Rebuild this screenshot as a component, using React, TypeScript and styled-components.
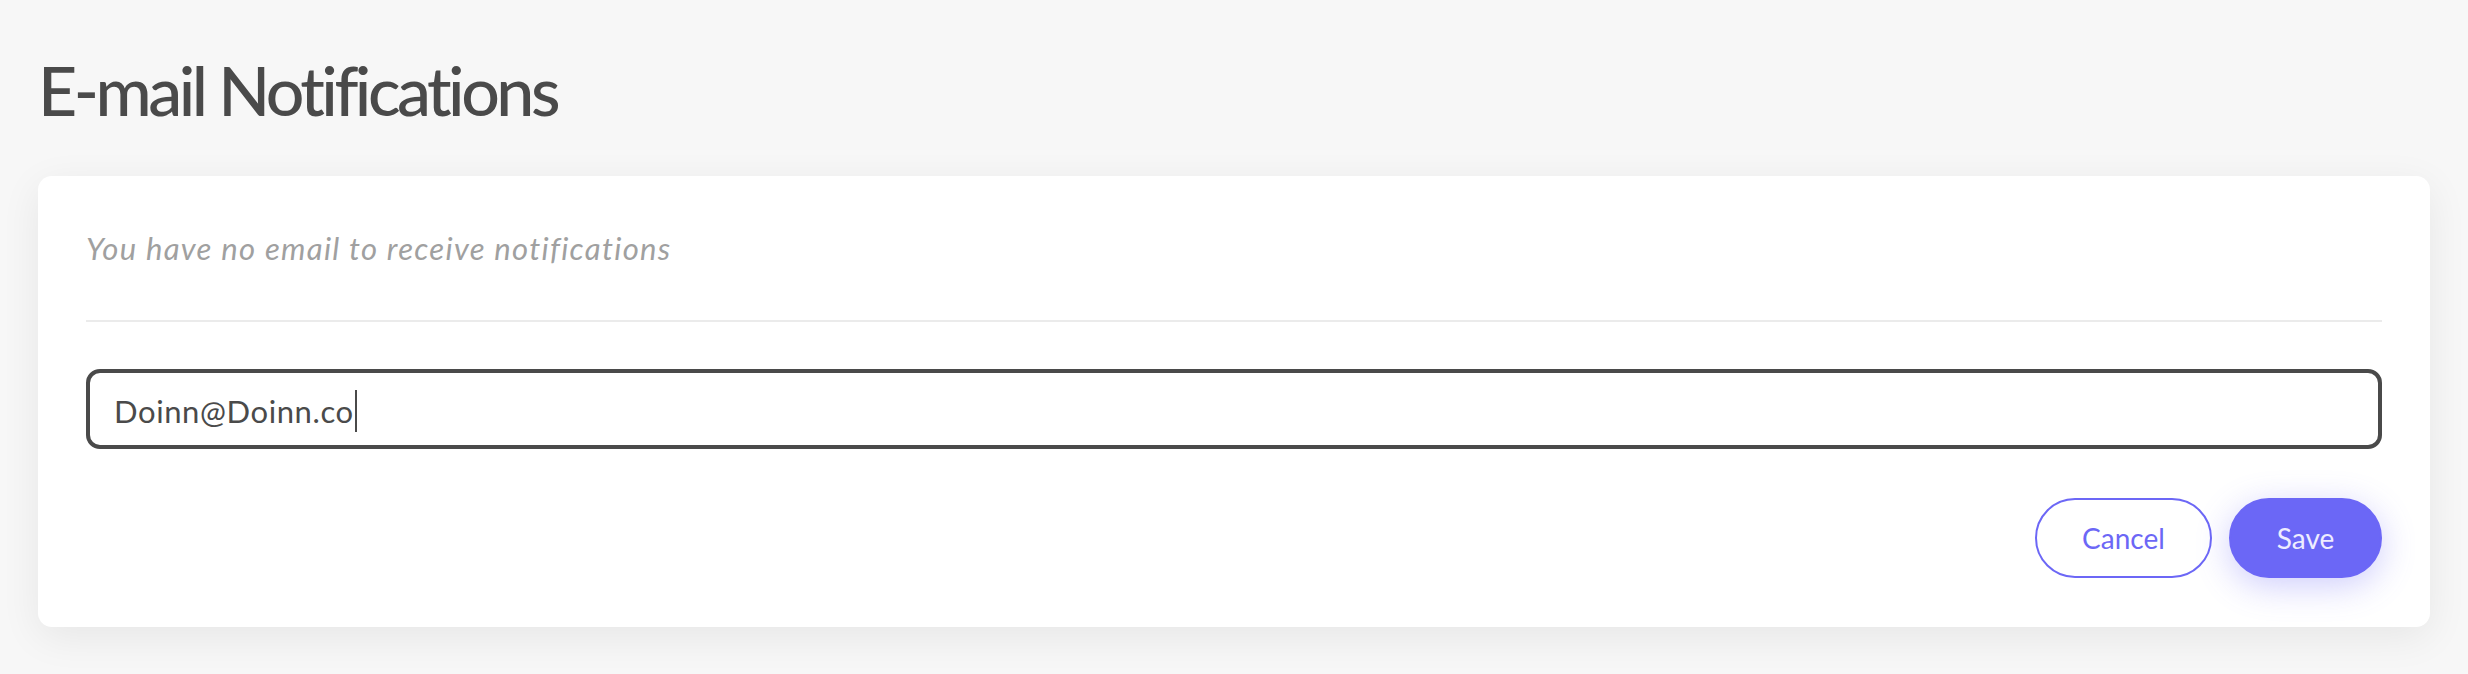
import * as React from 'react';
import styled, { createGlobalStyle } from 'styled-components';

const GlobalStyle = createGlobalStyle`
  html, body {
    margin: 0;
    padding: 0;
    background: #f7f7f7;
  }
  body {
    font-family: Lato, "Noto Sans", sans-serif;
  }
`;

const Page = styled.div`
  min-height: 100vh;
  box-sizing: border-box;
  padding: 56px 38px 40px;
  background: #f7f7f7;
`;

const Title = styled.h1`
  margin: 0 0 52px;
  font-size: 68px;
  line-height: 68px;
  font-weight: 500;
  letter-spacing: -3.5px;
  color: #4a4a4a;
`;

const Card = styled.section`
  background: #ffffff;
  border-radius: 14px;
  box-shadow: 0 10px 40px rgba(0, 0, 0, 0.07);
  padding: 54px 48px 49px;
`;

const EmptyNote = styled.p`
  margin: 0;
  font-size: 31px;
  line-height: 36px;
  font-style: italic;
  letter-spacing: 1.3px;
  color: #a0a0a0;
`;

const Divider = styled.hr`
  margin: 54px 0 47px;
  border: 0;
  border-top: 2px solid #ebebeb;
`;

const Field = styled.div`
  box-sizing: border-box;
  height: 80px;
  display: flex;
  align-items: center;
  padding: 3px 24px 0;
  border: 4px solid #4a4a4a;
  border-radius: 14px;
  font-size: 31px;
  letter-spacing: 0.6px;
  color: #4a4a4a;
`;

const Caret = styled.span`
  display: inline-block;
  width: 2px;
  height: 42px;
  margin-left: 1px;
  background: #4a4a4a;
`;

const Actions = styled.div`
  display: flex;
  justify-content: flex-end;
  gap: 17px;
  margin-top: 49px;
`;

const Button = styled.button<{ $primary?: boolean }>`
  box-sizing: border-box;
  height: 80px;
  width: ${p => (p.$primary ? '153px' : '177px')};
  border-radius: 40px;
  font-family: Lato, "Noto Sans", sans-serif;
  font-size: 28px;
  cursor: pointer;
  border: 2px solid #6c67f6;
  background: ${p => (p.$primary ? '#6b67f6' : '#ffffff')};
  color: ${p => (p.$primary ? '#eeedff' : '#6c67f6')};
  box-shadow: ${p => (p.$primary ? '0 8px 34px rgba(107, 103, 246, 0.32)' : 'none')};
`;

const App = () => {
  return (
    <>
      <GlobalStyle />
      <Page>
        <Title>E-mail Notifications</Title>
        <Card>
          <EmptyNote>You have no email to receive notifications</EmptyNote>
          <Divider />
          <Field>
            Doinn@Doinn.co
            <Caret />
          </Field>
          <Actions>
            <Button>Cancel</Button>
            <Button $primary>Save</Button>
          </Actions>
        </Card>
      </Page>
    </>
  );
};

export default App;
